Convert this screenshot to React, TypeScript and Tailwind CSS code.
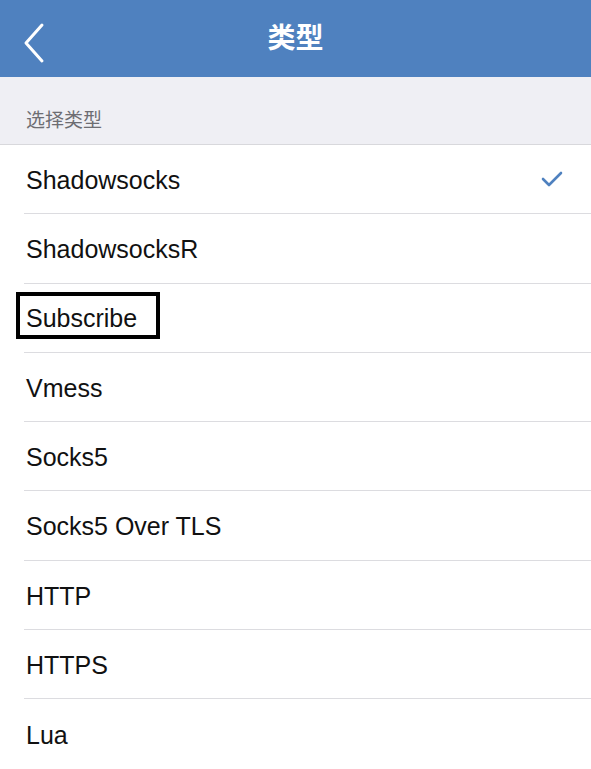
import React from "react";

const items = [
  "Shadowsocks",
  "ShadowsocksR",
  "Subscribe",
  "Vmess",
  "Socks5",
  "Socks5 Over TLS",
  "HTTP",
  "HTTPS",
  "Lua",
];

const App = () => {
  return (
    <div className="min-h-[769px] w-[591px] bg-[#efeff4] font-['Liberation_Sans','Noto_Sans_CJK_SC',sans-serif]">
      <div className="relative flex h-[77px] items-center justify-center bg-[#4f81bf]">
        <svg
          className="absolute left-[21px] top-[22px]"
          width="26"
          height="42"
          viewBox="0 0 26 42"
          fill="none"
        >
          <path d="M21 3 L5 21 L21 39" stroke="white" strokeWidth="3" strokeLinecap="round" strokeLinejoin="round" />
        </svg>
        <h1 className="text-[28px] font-bold text-white">类型</h1>
      </div>

      <div className="flex h-[67px] items-end px-[26px] pb-[9px] text-[19px] text-[#6d6d72]">
        选择类型
      </div>

      <div className="border-t border-[#d8d8dc] bg-white">
        {items.map((item, i) => (
          <div key={item} className="flex h-[69.3px] items-center pl-[24px]">
            <div
              className={
                "flex h-full flex-1 items-center pr-[28px] pt-[3px] " +
                (i < items.length - 1 ? "border-b border-[#dcdce0]" : "")
              }
            >
              <span className="relative ml-[2px] flex-1 text-[25px] text-[#111]">
                {item === "Subscribe" ? (
                  <span className="relative">
                    {item}
                    <span className="absolute left-[-10px] top-[-12px] h-[47px] w-[144px] border-[4px] border-black" />
                  </span>
                ) : (
                  item
                )}
              </span>
              {i === 0 && (
                <svg className="-mt-[3px]" width="22" height="16" viewBox="0 0 22 16" fill="none">
                  <path d="M2 8 L8 14 L20 2" stroke="#4f81bf" strokeWidth="2.6" strokeLinecap="round" strokeLinejoin="round" />
                </svg>
              )}
            </div>
          </div>
        ))}
      </div>
    </div>
  );
};

export default App;
